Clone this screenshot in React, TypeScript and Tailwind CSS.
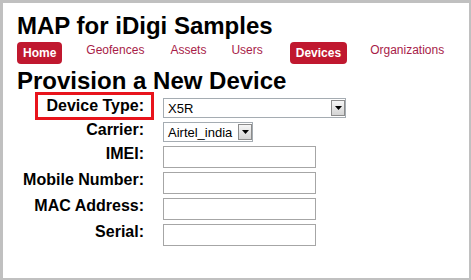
import React from "react";

function Arrow({ className }: { className?: string }) {
  return (
    <div
      className={
        "flex items-center justify-center w-[14px] h-[16px] border border-[#8c8c8c] bg-gradient-to-b from-[#f6f6f6] to-[#d4d4d4] " +
        (className || "")
      }
    >
      <svg width="7" height="4" viewBox="0 0 7 4">
        <polygon points="0,0 7,0 3.5,4" fill="#000" />
      </svg>
    </div>
  );
}

function Row({
  label,
  children,
  highlight,
}: {
  label: string;
  children: React.ReactNode;
  highlight?: boolean;
}) {
  return (
    <div className="flex items-start">
      <div className="relative w-[127px] -mt-[1px] text-right text-[16px] leading-[18px] font-bold text-black">
        {label}
        {highlight && (
          <span className="absolute left-[18px] -top-[5px] w-[119px] h-[28px] border-[3px] border-[#e8141c]" />
        )}
      </div>
      <div className="ml-[19px]">{children}</div>
    </div>
  );
}

function Input() {
  return <div className="w-[153px] h-[22px] border border-[#a6a6a6] bg-white" />;
}

export default function App() {
  return (
    <div className="w-[471px] h-[280px] bg-white border-t-[3px] border-l-[3px] border-r-[2px] border-b-[2px] border-[#c0c0c0] pl-[14px] pt-[11px] font-['Liberation_Sans',Arial,sans-serif] text-black">
      <h1 className="text-[24px] leading-[24px] font-bold">MAP for iDigi Samples</h1>
      <nav className="mt-[4px] flex items-start h-[22px]">
        <div className="h-[22px] px-[6px] rounded-[4px] bg-[#c0182f] text-white text-[12px] font-bold flex items-center">
          Home
        </div>
        <div className="ml-[24px] text-[12px] leading-[14px] mt-[1px] text-[#a81c48]">Geofences</div>
        <div className="ml-[26px] text-[12px] leading-[14px] mt-[1px] text-[#a81c48]">Assets</div>
        <div className="ml-[25px] text-[12px] leading-[14px] mt-[1px] text-[#a81c48]">Users</div>
        <div className="ml-[27px] h-[22px] px-[6px] rounded-[4px] bg-[#c0182f] text-white text-[12px] font-bold flex items-center">
          Devices
        </div>
        <div className="ml-[23px] text-[12px] leading-[14px] mt-[1px] text-[#a81c48]">Organizations</div>
      </nav>
      <h2 className="mt-[5px] text-[24px] leading-[24px] font-bold">Provision a New Device</h2>
      <div className="mt-[5px] flex flex-col gap-[4px]">
        <Row label="Device Type:" highlight>
          <div className="w-[183px] h-[20px] border border-[#a5acb2] bg-white flex items-center justify-between pl-[4px] pr-[0px]">
            <span className="text-[13px] leading-[15px]">X5R</span>
            <Arrow />
          </div>
        </Row>
        <Row label="Carrier:">
          <div className="w-[90px] h-[20px] border border-[#a5acb2] bg-white flex items-center justify-between pl-[4px] pr-[0px]">
            <span className="text-[13px] leading-[15px]">Airtel_india</span>
            <Arrow />
          </div>
        </Row>
        <Row label="IMEI:">
          <Input />
        </Row>
        <Row label="Mobile Number:">
          <Input />
        </Row>
        <Row label="MAC Address:">
          <Input />
        </Row>
        <Row label="Serial:">
          <Input />
        </Row>
      </div>
    </div>
  );
}
